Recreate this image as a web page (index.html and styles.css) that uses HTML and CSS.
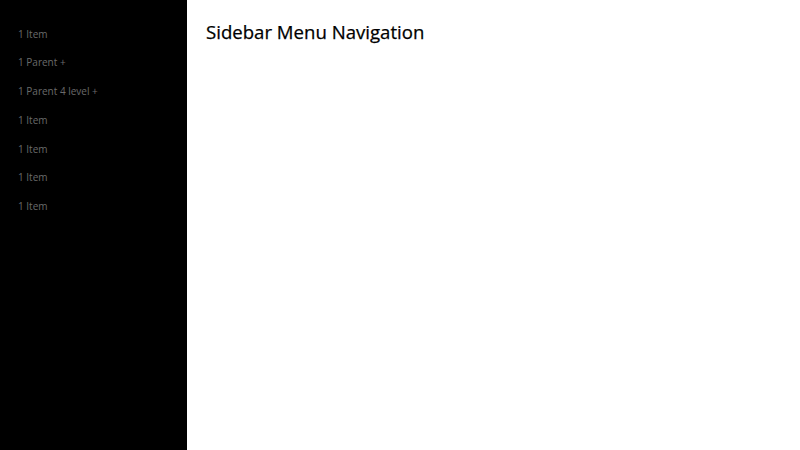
FILE: index.html
```html
<!DOCTYPE html>
<html>
<head>
<meta charset="utf-8">
<link rel="stylesheet" href="styles.css">
</head>
<body>
<nav class="sidebar">
  <ul class="menu">
    <li class="menu-item">1 Item</li>
    <li class="menu-item">1 Parent +</li>
    <li class="menu-item">1 Parent 4 level +</li>
    <li class="menu-item">1 Item</li>
    <li class="menu-item">1 Item</li>
    <li class="menu-item">1 Item</li>
    <li class="menu-item">1 Item</li>
  </ul>
</nav>
<main class="content">
  <h1 class="title">Sidebar Menu Navigation</h1>
</main>
</body>
</html>
```
FILE: styles.css
```css
html, body {
  margin: 0;
  padding: 0;
  height: 100%;
}
body {
  display: flex;
  font-family: "Open Sans", sans-serif;
  background: #fff;
}
.sidebar {
  width: 187px;
  flex: none;
  background: #000;
  min-height: 100%;
}
.menu {
  list-style: none;
  margin: 0;
  padding: 19.5px 0 0 0;
}
.menu-item {
  font-size: 10px;
  line-height: 16.8px;
  padding: 6px 18px;
  color: #6a6a6a;
}
.content {
  flex: 1;
  padding: 0 19px;
}
.title {
  margin: 18px 0 0 0;
  font-size: 18.6px;
  font-weight: 500;
  line-height: 28px;
  color: #000;
  -webkit-text-stroke: 0.25px #000;
}
```
